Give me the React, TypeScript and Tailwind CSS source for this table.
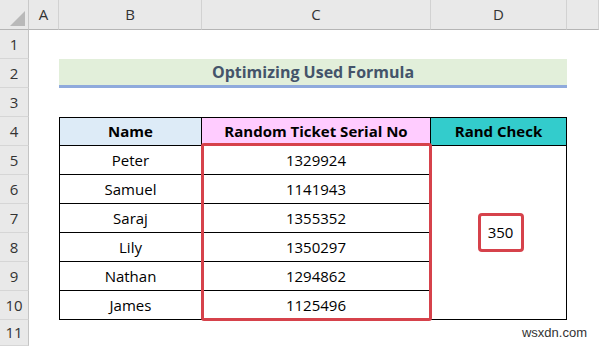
import React from "react";

const names = ["Peter", "Samuel", "Saraj", "Lily", "Nathan", "James"];
const serials = ["1329924", "1141943", "1355352", "1350297", "1294862", "1125496"];
const cols = ["A", "B", "C", "D", ""];

export default function App() {
  return (
    <div className="w-[599px] h-[346px] overflow-hidden bg-white font-['Open_Sans',sans-serif] text-[15px] text-black">
      <div className="grid grid-cols-[29px_30px_143px_229px_136px_1fr] grid-rows-[30px_repeat(10,29px)_26px]">
        {/* corner */}
        <div className="col-start-1 row-start-1 bg-[#e9e9e9] border-r border-b border-r-[#c9c9c9] border-b-[#b5b5b5] flex items-end justify-end p-[3px]">
          <svg width="15" height="15" viewBox="0 0 15 15">
            <polygon points="15,0 15,15 0,15" fill="#b9b9b9" />
          </svg>
        </div>

        {/* column headers */}
        {cols.map((c, i) => (
          <div
            key={i}
            className="row-start-1 bg-[#e9e9e9] border-r border-b border-r-[#d2d2d2] border-b-[#b5b5b5] flex items-center justify-center text-[#333] text-[15px]"
          >
            {c}
          </div>
        ))}

        {/* row headers */}
        {Array.from({ length: 11 }, (_, i) => (
          <div
            key={i}
            className="col-start-1 bg-[#e9e9e9] border-r border-b border-r-[#c4c4c4] border-b-[#d6d6d6] flex items-center justify-center text-[#333] text-[15px]"
            style={{ gridRowStart: i + 2 }}
          >
            {i + 1}
          </div>
        ))}

        {/* title */}
        <div className="col-start-3 col-span-3 row-start-3 bg-[#e2efda] border-b-[3px] border-[#8faadc] flex items-center justify-center font-bold text-[#44546a] text-[16px]">
          Optimizing Used Formula
        </div>

        {/* table header */}
        <div className="col-start-3 row-start-5 bg-[#ddebf7] border border-black flex items-center justify-center font-bold">
          Name
        </div>
        <div className="col-start-4 row-start-5 bg-[#ffccff] border-y border-r border-black flex items-center justify-center font-bold">
          Random Ticket Serial No
        </div>
        <div className="col-start-5 row-start-5 bg-[#33cccc] border-y border-r border-black flex items-center justify-center font-bold">
          Rand Check
        </div>

        {/* names */}
        {names.map((n, i) => (
          <div
            key={n}
            className="col-start-3 border-x border-b border-black flex items-center justify-center"
            style={{ gridRowStart: i + 6 }}
          >
            {n}
          </div>
        ))}

        {/* serials */}
        <div className="col-start-4 row-start-6 row-span-6 relative flex flex-col">
          {serials.map((s) => (
            <div key={s} className="flex-1 border-r border-b border-black flex items-center justify-center">
              {s}
            </div>
          ))}
          <div className="absolute -top-[3px] -left-[1px] -right-[1px] -bottom-[1px] border-[3px] border-[#d6424b] rounded-[3px]" />
        </div>

        {/* rand check */}
        <div className="col-start-5 row-start-6 row-span-6 border-r border-b border-black flex items-center justify-center pl-[4px]">
          <div className="w-[46px] h-[39px] border-[3px] border-[#d6424b] rounded-[4px] flex items-center justify-center">
            350
          </div>
        </div>

        {/* watermark */}
        <div className="col-start-5 col-span-2 row-start-12 flex items-center justify-end pr-[12px] font-['Liberation_Sans',sans-serif] text-[13px] text-[#333]">
          wsxdn.com
        </div>
      </div>
    </div>
  );
}
